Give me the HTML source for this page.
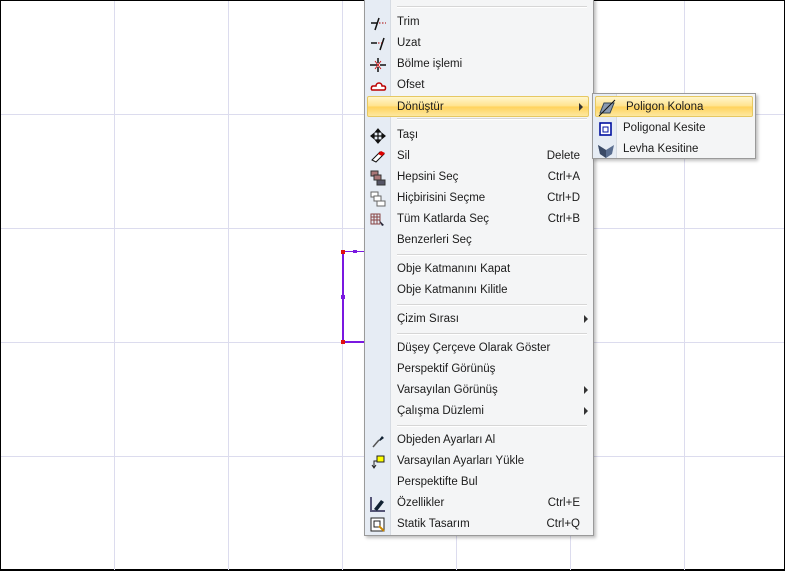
<!DOCTYPE html>
<html><head><meta charset="utf-8"><style>
*{margin:0;padding:0;box-sizing:border-box}
body{width:786px;height:572px;overflow:hidden;background:#fff;position:relative;font-family:"Liberation Sans",sans-serif;font-size:11.5px;color:#1b1b1b}
.frame{position:absolute;left:0;top:0;width:785px;height:571px;border:1px solid #000;border-bottom:2px solid #000}
.gv{position:absolute;top:1px;width:1px;height:569px;background:#dcdcee}
.gh{position:absolute;left:1px;height:1px;width:783px;background:#dcdcee}
.menu{position:absolute;left:364px;top:-2px;width:230px;height:538px;background:#f4f5f6;border:1px solid #9a9a9a;box-shadow:2px 2px 3px rgba(0,0,0,.25)}
.gut{position:absolute;left:0;top:0;width:26px;height:100%;background:#e6ecf4;border-right:1px solid #d6dbe2}
.it{position:absolute;left:0;width:228px;height:21px;line-height:21px}
.it .t{position:absolute;left:32px}
.it .k{position:absolute;right:13px}
.it .ar{position:absolute;right:5px;top:6px;width:0;height:0;border-left:4px solid #333;border-top:4px solid transparent;border-bottom:4px solid transparent}
.it svg{position:absolute;left:4px;top:2px}
.sep{position:absolute;left:32px;right:6px;height:2px;border-top:1px solid #d6d6d6;border-bottom:1px solid #fff}
.hl{left:2px;width:222px;border:1px solid #e6c862;border-radius:2px;background:linear-gradient(#fff6cc,#ffe28a 50%,#ffd25a 51%,#fde8a0)}
.hl .t{left:29px}
.sub{position:absolute;left:592px;top:93px;width:164px;height:66px;background:#f4f5f6;border:1px solid #9a9a9a;box-shadow:2px 2px 3px rgba(0,0,0,.25)}
.sub .gut{width:24px}
.sub .it{width:162px}
.sub .it .t{left:30px}
</style></head><body>
<div class="frame"></div>
<div class="gv" style="left:114px"></div><div class="gv" style="left:228px"></div><div class="gv" style="left:342px"></div><div class="gv" style="left:456px"></div><div class="gv" style="left:570px"></div><div class="gv" style="left:684px"></div>
<div class="gh" style="top:114px"></div><div class="gh" style="top:228px"></div><div class="gh" style="top:342px"></div><div class="gh" style="top:456px"></div>
<div style="position:absolute;left:342px;top:251px;width:2px;height:92px;background:#7a18e0"></div>
<div style="position:absolute;left:342px;top:251px;width:22px;height:1px;background:#7a18e0"></div>
<div style="position:absolute;left:342px;top:341px;width:22px;height:2px;background:#7a18e0"></div>
<div style="position:absolute;left:341px;top:250px;width:4px;height:4px;background:#e01010"></div>
<div style="position:absolute;left:341px;top:340px;width:4px;height:4px;background:#e01010"></div>
<div style="position:absolute;left:353px;top:250px;width:4px;height:3px;background:#7a18e0"></div>
<div style="position:absolute;left:341px;top:295px;width:4px;height:4px;background:#7a18e0"></div>
<div style="position:absolute;left:370px;top:339px;width:1px;height:6px;background:#e8c800"></div>

<div class="menu"><div class="gut"></div>
<div class="sep" style="top:7px"></div>
<div class="it" style="top:13px"><svg width="18" height="18"><path d="M2 9h6M10 4l-4 12" stroke="#111" stroke-width="1.5"/><path d="M10 9h7" stroke="#a00" stroke-dasharray="1.5 1.5"/></svg><span class="t">Trim</span></div>
<div class="it" style="top:34px"><svg width="18" height="18"><path d="M2 8h6M15 3l-4 12" stroke="#111" stroke-width="1.5"/><path d="M9 8h4" stroke="#a00" stroke-dasharray="1.5 1.5"/></svg><span class="t">Uzat</span></div>
<div class="it" style="top:55px"><svg width="18" height="18"><path d="M1 9h7M11 9h6M9 2v5M9 11v5" stroke="#111" stroke-width="1.5"/><path d="M6 5l6 8M12 5l-6 8" stroke="#c00" stroke-width=".8"/></svg><span class="t">Bölme işlemi</span></div>
<div class="it" style="top:76px"><svg width="18" height="18"><path d="M3 13h12c2 0 2-4 0-4h-2c0-4-6-4-6 0H4c-2 0-2 4-1 4z" fill="#fff" stroke="#b00" stroke-width="1.5"/></svg><span class="t">Ofset</span></div>
<div class="it hl" style="top:97px"><span class="t">Dönüştür</span><span class="ar"></span></div>
<div class="sep" style="top:119px"></div>
<div class="it" style="top:126px"><svg width="18" height="18"><path d="M9 2v14M2 9h14M9 2l-2.5 3h5zM9 16l-2.5-3h5zM2 9l3-2.5v5zM16 9l-3-2.5v5z" stroke="#111" fill="#111" stroke-width="1.2"/></svg><span class="t">Taşı</span></div>
<div class="it" style="top:147px"><svg width="18" height="18"><path d="M3 12l8-8 4 2-8 8z" fill="#fff" stroke="#111"/><path d="M9 6l3-3 4 2-3 3z" fill="#d00"/></svg><span class="t">Sil</span><span class="k">Delete</span></div>
<div class="it" style="top:168px"><svg width="18" height="18"><rect x="2" y="2" width="7" height="5" fill="#a77" stroke="#333"/><rect x="5" y="6" width="7" height="5" fill="#a77" stroke="#333"/><rect x="8" y="11" width="8" height="5" fill="#556" stroke="#333"/></svg><span class="t">Hepsini Seç</span><span class="k">Ctrl+A</span></div>
<div class="it" style="top:189px"><svg width="18" height="18"><rect x="2" y="2" width="7" height="5" fill="#fff" stroke="#666"/><rect x="5" y="6" width="7" height="5" fill="#fff" stroke="#666"/><rect x="8" y="11" width="8" height="5" fill="#fff" stroke="#666"/></svg><span class="t">Hiçbirisini Seçme</span><span class="k">Ctrl+D</span></div>
<div class="it" style="top:210px"><svg width="18" height="18"><path d="M2 3h9v10H2zM2 6h9M2 9h9M5 3v10M8 3v10" stroke="#844" fill="none"/><path d="M10 9l5 5-2 1z" fill="#223"/></svg><span class="t">Tüm Katlarda Seç</span><span class="k">Ctrl+B</span></div>
<div class="it" style="top:231px"><span class="t">Benzerleri Seç</span></div>
<div class="sep" style="top:255px"></div>
<div class="it" style="top:260px"><span class="t">Obje Katmanını Kapat</span></div>
<div class="it" style="top:281px"><span class="t">Obje Katmanını Kilitle</span></div>
<div class="sep" style="top:305px"></div>
<div class="it" style="top:310px"><span class="t">Çizim Sırası</span><span class="ar"></span></div>
<div class="sep" style="top:334px"></div>
<div class="it" style="top:339px"><span class="t">Düşey Çerçeve Olarak Göster</span></div>
<div class="it" style="top:360px"><span class="t">Perspektif Görünüş</span></div>
<div class="it" style="top:381px"><span class="t">Varsayılan Görünüş</span><span class="ar"></span></div>
<div class="it" style="top:402px"><span class="t">Çalışma Düzlemi</span><span class="ar"></span></div>
<div class="sep" style="top:426px"></div>
<div class="it" style="top:431px"><svg width="18" height="18"><path d="M4 15l6-7" stroke="#555" stroke-width="1.5"/><path d="M10 8l3-4 2 2-4 3z" fill="#123"/></svg><span class="t">Objeden Ayarları Al</span></div>
<div class="it" style="top:452px"><svg width="18" height="18"><rect x="8" y="3" width="7" height="6" fill="#ff0" stroke="#222"/><path d="M8 8H5v6M3 12l2 3 2-3" stroke="#222" fill="none"/></svg><span class="t">Varsayılan Ayarları Yükle</span></div>
<div class="it" style="top:473px"><span class="t">Perspektifte Bul</span></div>
<div class="it" style="top:494px"><svg width="18" height="18"><path d="M2 2v14h14" stroke="#557" stroke-width="2" fill="none"/><path d="M5 14l7-9 3 2-7 9z" fill="#123"/></svg><span class="t">Özellikler</span><span class="k">Ctrl+E</span></div>
<div class="it" style="top:515px"><svg width="18" height="18"><rect x="2" y="2" width="13" height="13" fill="#fff" stroke="#222"/><rect x="5" y="5" width="6" height="6" fill="none" stroke="#222"/><path d="M10 10l5 5" stroke="#c80" stroke-width="2"/></svg><span class="t">Statik Tasarım</span><span class="k">Ctrl+Q</span></div>
</div>

<div class="sub"><div class="gut"></div>
<div class="it hl" style="top:2px;width:158px"><svg width="18" height="18" style="left:2px"><path d="M2 14l4-10h10l-4 10z" fill="#8a9ab0" stroke="#345"/><path d="M1 17L17 1" stroke="#111"/></svg><span class="t">Poligon Kolona</span></div>
<div class="it" style="top:24px"><svg width="18" height="18"><rect x="3" y="3" width="11" height="12" fill="#fff" stroke="#0010a0" stroke-width="1.6"/><rect x="6" y="7" width="5" height="5" fill="none" stroke="#0010a0"/></svg><span class="t">Poligonal Kesite</span></div>
<div class="it" style="top:45px"><svg width="18" height="18"><path d="M1 4l8 5 8-5-2 9-6 4-6-4z" fill="#5a6e90"/><path d="M1 4l8 5v8l-6-4z" fill="#3a4a66"/></svg><span class="t">Levha Kesitine</span></div>
</div>
</body></html>
